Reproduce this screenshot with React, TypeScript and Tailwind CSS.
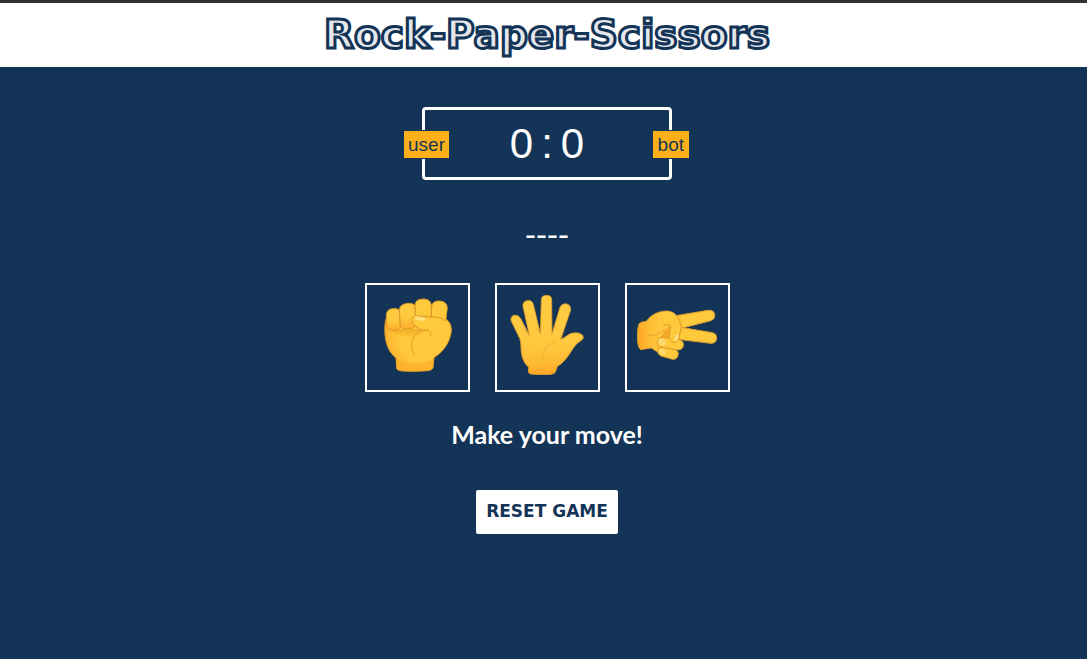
import { useState } from "react";

type Move = "rock" | "paper" | "scissors";
const moves: Move[] = ["rock", "paper", "scissors"];
const beats: Record<Move, Move> = { rock: "scissors", paper: "rock", scissors: "paper" };

function Rock() {
  return (
    <svg viewBox="51 60 240 240" className="size-20" aria-hidden="true">
      <defs>
        <radialGradient id="rock-skin" cx="0.62" cy="0.42" r="0.68">
          <stop offset="0.6" stopColor="#ffc93b" />
          <stop offset="1" stopColor="#ffab29" />
        </radialGradient>
        <linearGradient id="rock-finger" x1="0" y1="0" x2="0" y2="1">
          <stop offset="0.55" stopColor="#ffca40" />
          <stop offset="1" stopColor="#ffab2b" />
        </linearGradient>
        <linearGradient id="rock-shade" x1="0" y1="0" x2="0" y2="1">
          <stop offset="0" stopColor="#d98b12" stopOpacity="0.65" />
          <stop offset="1" stopColor="#e99a1a" stopOpacity="0" />
        </linearGradient>
      </defs>
      <path d="M77 133C73 157 73 188 82 212C88 229 98 241 108 249L110 281Q112 287 126 288Q164 291 204 287Q217 285 219 278L222 248C246 233 263 211 271 184C278 161 273 143 258 132L245 119L100 120Z" fill="url(#rock-skin)" stroke="#d99728" strokeWidth="3" />
      <path d="M88 154C115 169 148 163 174 162L210 166C190 169 177 177 166 190C133 193 101 180 88 154Z" fill="url(#rock-shade)" />
      <path d="M79 121Q80 102 98 101Q109 100 118 104L122 155Q116 166 103 165Q83 166 80 151Z" fill="url(#rock-finger)" stroke="#d99728" strokeWidth="3" />
      <path d="M118 104Q119 90 137 86Q155 82 165 91L168 151Q158 163 142 162Q123 162 121 151Z" fill="url(#rock-finger)" stroke="#d99728" strokeWidth="3" />
      <path d="M215 92Q219 77 239 78Q260 79 262 98L257 138Q230 137 214 128Z" fill="#ffc93c" stroke="#d99728" strokeWidth="3" />
      <path d="M165 91Q165 72 190 72Q212 72 214 91L214 123Q195 133 166 124Z" fill="#ffc93c" stroke="#d99728" strokeWidth="3" />
      <path d="M155 133Q158 122 174 123L232 126Q259 130 270 151Q263 176 214 181Q216 168 205 167Q178 169 162 151Q152 143 155 133Z" fill="#ffc93c" />
      <path d="M257 139Q247 128 232 127L173 123Q154 122 155 137Q158 151 176 160Q191 168 205 166" fill="none" stroke="#d99728" strokeWidth="3" strokeLinecap="round" />
      <path d="M164 124Q184 124 196 130Q202 138 190 138Q171 138 163 130Z" fill="#ffe083" />
      <path d="M181 168Q154 181 155 214Q156 230 163 239M205 166Q213 170 213 184" fill="none" stroke="#dda02c" strokeWidth="3" strokeLinecap="round" />
      <path d="M108 251Q139 268 164 265Q197 266 222 250L218 279Q215 286 203 286Q164 290 126 286Q112 286 111 278Z" fill="#ffb02c" opacity="0.75" />
    </svg>
  );
}

function Paper() {
  return (
    <svg viewBox="51 60 240 240" className="size-20" aria-hidden="true">
      <defs>
        <linearGradient id="paper-skin" x1="0" y1="0" x2="0" y2="1">
          <stop offset="0.55" stopColor="#ffca40" />
          <stop offset="0.85" stopColor="#ffbb34" />
          <stop offset="1" stopColor="#ffa526" />
        </linearGradient>
      </defs>
      <path d="M115 291Q117 298 130 298Q156 301 183 298Q195 297 197 289L202 274C220 264 233 246 243 230C254 213 260 204 272 198Q284 190 278 181Q268 170 245 175C233 178 226 188 212 193L241 108Q244 91 231 87Q216 84 210 97L186 176L185 73Q184 61 170 61Q155 61 154 74L151 176L130 88Q126 75 112 77Q97 80 99 94L118 181L91 129Q83 118 71 121Q60 126 64 139L89 190Q93 200 93 216C93 242 100 263 116 277Z" fill="url(#paper-skin)" stroke="#df9e2d" strokeWidth="2.5" strokeLinejoin="round" />
      <path d="M201 199C174 206 153 227 155 264" fill="none" stroke="#ecb035" strokeWidth="3" strokeLinecap="round" />
      <path d="M104 164L118 181L115 163M139 158L151 176L154 151M197 151L185 176M222 166L212 193L228 187" fill="none" stroke="#df9e2d" strokeWidth="2" />
    </svg>
  );
}

function Scissors() {
  return (
    <svg viewBox="48 60 240 240" className="size-20" aria-hidden="true">
      <defs>
        <linearGradient id="scissors-skin" x1="0" y1="0" x2="1" y2="0">
          <stop offset="0" stopColor="#ffa526" />
          <stop offset="0.28" stopColor="#ffbd35" />
          <stop offset="0.6" stopColor="#ffca40" />
        </linearGradient>
      </defs>
      <path d="M148 125L261 106Q279 104 281 119Q283 133 266 138L176 161Z" fill="#ffc93c" stroke="#df9e2d" strokeWidth="3" />
      <path d="M173 156L274 173Q288 177 287 190Q286 205 270 205L170 193Z" fill="#ffc93c" stroke="#df9e2d" strokeWidth="3" />
      <path d="M55 145Q61 140 76 139C91 117 117 107 141 108Q157 110 164 119Q179 136 182 154L174 190L161 230L123 237Q103 229 91 219L59 224Q50 218 49 190Q48 159 55 145Z" fill="url(#scissors-skin)" stroke="#df9e2d" strokeWidth="2.5" />
      <path d="M129 167Q143 157 148 151L145 195L111 192Q124 184 129 167Z" fill="#f6a928" />
      <path d="M111 220Q119 214 134 219L163 224Q174 229 171 241Q168 254 155 253L120 243Q107 237 111 220Z" fill="#ffc93c" stroke="#df9e2d" strokeWidth="3" />
      <path d="M109 201Q110 186 125 187L176 195Q189 199 187 211Q186 224 171 225L125 217Q108 215 109 201Z" fill="#ffc93c" stroke="#df9e2d" strokeWidth="3" />
      <path d="M126 151Q139 145 149 153L146 177Q143 200 159 203Q170 203 174 186L181 156Q177 133 164 120L141 124Z" fill="#ffc93c" />
      <path d="M126 151Q139 145 149 153L146 177Q143 200 159 203Q170 203 174 186L181 156Q177 135 165 120" fill="none" stroke="#df9e2d" strokeWidth="3" strokeLinejoin="round" />
      <path d="M162 187Q165 175 171 177Q175 180 171 191Q168 199 162 199Q160 193 162 187Z" fill="#ffe083" />
      <path d="M116 191Q132 189 134 200Q134 212 122 212Q111 210 112 201Q112 195 116 191ZM115 222Q130 219 134 229Q135 241 123 239Q112 235 115 222Z" fill="#ffda70" />
      <path d="M81 181Q108 185 129 165" fill="none" stroke="#e6a22c" strokeWidth="3" strokeLinecap="round" />
    </svg>
  );
}

const icons = { rock: Rock, paper: Paper, scissors: Scissors };

export default function App() {
  const [score, setScore] = useState({ user: 0, bot: 0 });
  const [result, setResult] = useState("----");

  const play = (move: Move) => {
    const reply = moves[Math.floor(Math.random() * moves.length)];
    if (move === reply) {
      setResult("Draw");
    } else if (beats[move] === reply) {
      setScore((s) => ({ ...s, user: s.user + 1 }));
      setResult("You win");
    } else {
      setScore((s) => ({ ...s, bot: s.bot + 1 }));
      setResult("You lose");
    }
  };

  const reset = () => {
    setScore({ user: 0, bot: 0 });
    setResult("----");
  };

  return (
    <div className="min-h-screen bg-[#133457] font-['Liberation_Sans',sans-serif] text-white">
      <header className="flex h-[67px] items-center justify-center border-t-[3px] border-[#333333] bg-white pl-[7px]">
        <h1 className="font-['DejaVu_Sans',sans-serif] text-[39px] leading-[48px] font-bold text-[#e4e7eb] [-webkit-text-stroke:3px_#133457]">
          Rock-Paper-Scissors
        </h1>
      </header>
      <main className="flex flex-col items-center pt-10 pl-[7px]">
        <section aria-label="Score" className="relative flex h-[73px] w-[250px] items-center justify-center rounded border-[3px] border-white">
          <span className="absolute top-5 -left-[22px] border border-[#133457] bg-[#fdb019] bg-clip-padding px-1 text-[19px] leading-[27px] text-[#133457]">
            user
          </span>
          <p className="flex gap-2 text-[42px] leading-[60px]">
            <span>{score.user}</span>
            <span>:</span>
            <span>{score.bot}</span>
          </p>
          <span className="absolute top-5 -right-[21px] border border-[#133457] bg-[#fdb019] bg-clip-padding px-[5px] text-[19px] leading-[27px] text-[#133457]">
            bot
          </span>
        </section>
        <p className="mt-[35px] text-[33px] leading-10">{result}</p>
        <div className="mt-7 flex gap-[25px]">
          {moves.map((move) => {
            const Icon = icons[move];
            return (
              <button
                key={move}
                type="button"
                aria-label={move}
                onClick={() => play(move)}
                className="flex h-[109px] w-[105px] cursor-pointer items-start border-2 border-white p-2.5"
              >
                <Icon />
              </button>
            );
          })}
        </div>
        <p className="mt-[26px] font-['Lato',sans-serif] text-[25px] leading-8 font-bold">Make your move!</p>
        <button
          type="button"
          onClick={reset}
          className="mt-10 h-11 cursor-pointer rounded-xs bg-white px-2.5 font-['DejaVu_Sans',sans-serif] text-[17px] font-bold text-[#133457]"
        >
          RESET GAME
        </button>
      </main>
    </div>
  );
}
